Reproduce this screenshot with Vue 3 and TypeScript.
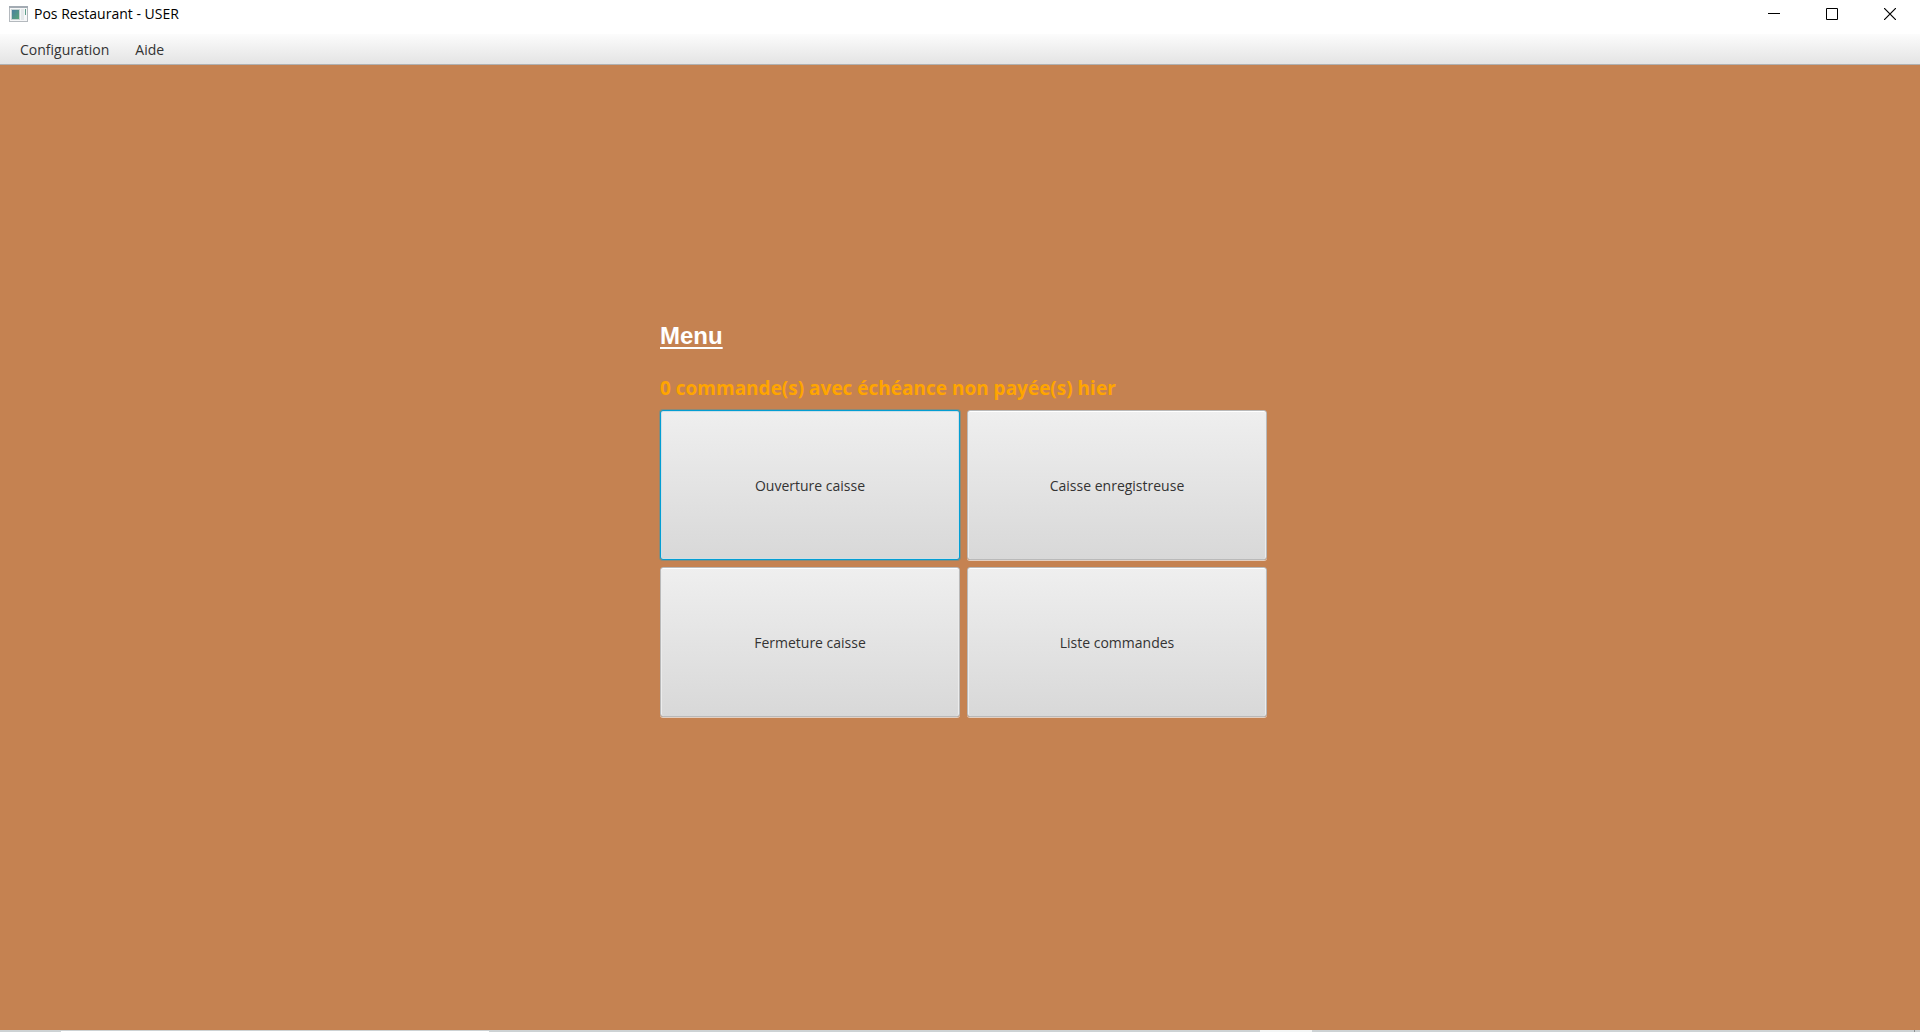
<script setup lang="ts">
import { onMounted, ref } from 'vue'

interface Action {
  id: string
  label: string
}

const title = 'Pos Restaurant - USER'
const menus: string[] = ['Configuration', 'Aide']
const actions: Action[] = [
  { id: 'open', label: 'Ouverture caisse' },
  { id: 'register', label: 'Caisse enregistreuse' },
  { id: 'close', label: 'Fermeture caisse' },
  { id: 'orders', label: 'Liste commandes' },
]
const overdue = ref(0)
const grid = ref<HTMLElement | null>(null)

onMounted(() => {
  grid.value?.querySelector('button')?.focus()
})
</script>

<template>
  <div class="window">
    <header class="titlebar">
      <svg class="app-icon" width="19" height="16" viewBox="0 0 19 16" aria-hidden="true">
        <defs>
          <linearGradient id="pane" x1="0" y1="0" x2="1" y2="1">
            <stop offset="0" stop-color="#4a7fa0" />
            <stop offset="1" stop-color="#58a578" />
          </linearGradient>
        </defs>
        <rect x="0.5" y="0.5" width="18" height="15" fill="#f6f7f8" stroke="#b4b9be" />
        <rect x="0" y="0" width="19" height="2" fill="#a3abb3" />
        <rect x="2" y="3" width="9" height="11" fill="#c8d4d4" />
        <rect x="3" y="4" width="7" height="9" fill="url(#pane)" />
        <rect x="12" y="3" width="3" height="11" fill="#e4e8ea" />
        <rect x="16" y="3" width="1" height="6" fill="#5f9f8a" />
      </svg>
      <span class="title">{{ title }}</span>
      <div class="controls">
        <button type="button" aria-label="Réduire">
          <svg width="12" height="12" viewBox="0 0 12 12" shape-rendering="crispEdges"><path d="M0 5h12v1H0z" /></svg>
        </button>
        <button type="button" aria-label="Agrandir">
          <svg width="12" height="12" viewBox="0 0 12 12"><path d="M.5.5h11v11H.5z" fill="none" stroke="#000" /></svg>
        </button>
        <button type="button" aria-label="Fermer">
          <svg width="12" height="12" viewBox="0 0 12 12"><path d="M0 0l12 12M12 0L0 12" fill="none" stroke="#000" stroke-width="1.2" /></svg>
        </button>
      </div>
    </header>

    <nav class="menubar">
      <button v-for="menu in menus" :key="menu" type="button">{{ menu }}</button>
    </nav>

    <main class="content">
      <div class="panel">
        <h1>Menu</h1>
        <p class="notice">{{ overdue }} commande(s) avec échéance non payée(s) hier</p>
        <div ref="grid" class="grid">
          <button v-for="action in actions" :key="action.id" type="button">{{ action.label }}</button>
        </div>
      </div>
    </main>

    <footer class="taskbar">
      <span class="start"></span>
      <span class="search"></span>
      <span class="apps"></span>
      <span class="active"></span>
      <span class="tray"></span>
      <span class="desktop"></span>
    </footer>
  </div>
</template>

<style>
body {
  margin: 0;
}
</style>

<style scoped>
.window {
  display: flex;
  flex-direction: column;
  min-height: 100vh;
  background: #c58251;
  font-family: "Open Sans", "Noto Sans", sans-serif;
}

button {
  margin: 0;
  padding: 0;
  border: 0;
  background: none;
  color: #333;
  font-family: inherit;
}

.titlebar {
  display: flex;
  align-items: center;
  height: 28px;
  padding: 0 1px 6px 9px;
  background: #fff;
}

.title {
  margin-left: 6px;
  color: #000;
  font-size: 14px;
  line-height: 20px;
}

.controls {
  display: flex;
  margin-left: auto;
}

.controls button {
  display: flex;
  align-items: center;
  justify-content: center;
  width: 58px;
  height: 28px;
}

.menubar {
  display: flex;
  gap: 26px;
  height: 30px;
  padding: 0 20px;
  border-bottom: 1px solid #b0b0b0;
  background: linear-gradient(#fcfcfc, #e4e4e4);
}

.menubar button {
  font-size: 14px;
  line-height: 32px;
}

.content {
  display: flex;
  flex: 1;
  justify-content: center;
  padding: 257px 0 24px 7px;
}

.panel {
  width: 607px;
}

h1 {
  margin: 0 0 24px;
  color: #fff;
  font-family: "Liberation Sans", Arial, sans-serif;
  font-size: 24px;
  line-height: 28px;
  text-decoration: underline;
  text-decoration-thickness: 2px;
  text-underline-offset: 3px;
}

.notice {
  margin: 0 0 8px;
  color: #ffa500;
  font-size: 19px;
  font-weight: 700;
  line-height: 28px;
}

.grid {
  display: grid;
  grid-template-columns: 1fr 1fr;
  grid-auto-rows: 150px;
  gap: 7px;
}

.grid button {
  padding-top: 2px;
  border: 1px solid #b9b9b9;
  border-radius: 3px;
  background: linear-gradient(#efefef, #d8d8d8);
  box-shadow: inset 0 1px #fff, inset 1px 0 #ececec, inset -1px 0 #ececec, 0 1px #e3cfc1;
  font-size: 14px;
  line-height: 20px;
}

.grid button:focus {
  border-color: #039ed3;
  outline: none;
  box-shadow: inset 0 0 0 1px #cfdfe6, 0 0 0 1px rgba(3, 158, 211, 0.3);
}

.taskbar {
  display: flex;
  height: 2px;
  background: #cdd2d4;
}

.start {
  flex: 0 0 61px;
}

.search {
  flex: 0 0 428px;
  margin-top: 1px;
  background: #fff;
}

.apps {
  flex: 0 0 771px;
}

.active {
  flex: 0 0 52px;
  background: #f3f5f5;
}

.tray {
  flex: 1;
}

.desktop {
  flex: 0 0 5px;
  border-left: 1px solid #8c9092;
}
</style>
